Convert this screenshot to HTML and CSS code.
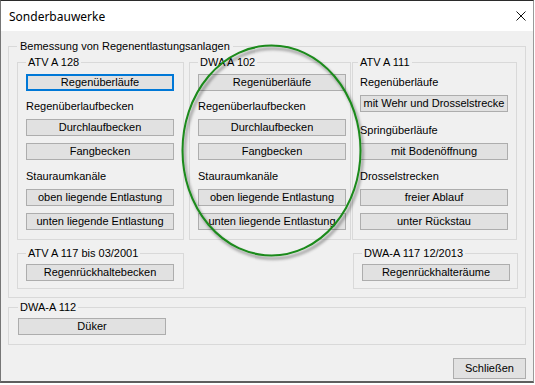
FILE: index.html
```html
<!DOCTYPE html>
<html lang="de">
<head>
    <meta charset="UTF-8">
    <title>Sonderbauwerke</title>
    <link rel="stylesheet" href="styles.css">
</head>
<body>
    <div class="window">
        <div class="titlebar">
            <span class="title">Sonderbauwerke</span>
            <svg class="close-x" width="10" height="10" viewBox="0 0 10 10">
                <path d="M0.5 0.5 L9.5 9.5 M9.5 0.5 L0.5 9.5" stroke="#111" stroke-width="1" fill="none"/>
            </svg>
        </div>

        <div class="client">
            <fieldset class="group outer">
                <legend>Bemessung von Regenentlastungsanlagen</legend>

                <div class="columns">
                    <fieldset class="group col col-128">
                        <legend>ATV A 128</legend>
                        <button class="btn focused">Regenüberläufe</button>
                        <div class="label">Regenüberlaufbecken</div>
                        <button class="btn">Durchlaufbecken</button>
                        <button class="btn">Fangbecken</button>
                        <div class="label after-pair">Stauraumkanäle</div>
                        <button class="btn">oben liegende Entlastung</button>
                        <button class="btn">unten liegende Entlastung</button>
                    </fieldset>

                    <fieldset class="group col col-102">
                        <legend>DWA A 102</legend>
                        <button class="btn">Regenüberläufe</button>
                        <div class="label">Regenüberlaufbecken</div>
                        <button class="btn">Durchlaufbecken</button>
                        <button class="btn">Fangbecken</button>
                        <div class="label after-pair">Stauraumkanäle</div>
                        <button class="btn">oben liegende Entlastung</button>
                        <button class="btn">unten liegende Entlastung</button>
                    </fieldset>

                    <fieldset class="group col col-111">
                        <legend>ATV A 111</legend>
                        <div class="label first">Regenüberläufe</div>
                        <button class="btn">mit Wehr und Drosselstrecke</button>
                        <div class="label wide-gap">Springüberläufe</div>
                        <button class="btn">mit Bodenöffnung</button>
                        <div class="label after-pair">Drosselstrecken</div>
                        <button class="btn">freier Ablauf</button>
                        <button class="btn">unter Rückstau</button>
                    </fieldset>
                </div>

                <div class="bottom-row">
                    <fieldset class="group small small-left">
                        <legend>ATV A 117 bis 03/2001</legend>
                        <button class="btn">Regenrückhaltebecken</button>
                    </fieldset>
                    <fieldset class="group small small-right">
                        <legend>DWA-A 117 12/2013</legend>
                        <button class="btn">Regenrückhalteräume</button>
                    </fieldset>
                </div>
            </fieldset>

            <fieldset class="group duker">
                <legend>DWA-A 112</legend>
                <button class="btn">Düker</button>
            </fieldset>

            <div class="footer">
                <button class="btn btn-close">Schließen</button>
            </div>
        </div>

        <svg class="mark" width="534" height="383" viewBox="0 0 534 383">
            <defs>
                <filter id="shadow" x="-10%" y="-10%" width="130%" height="130%">
                    <feDropShadow dx="2" dy="3" stdDeviation="1.5" flood-color="#000" flood-opacity="0.45"/>
                </filter>
            </defs>
            <ellipse cx="270.5" cy="149.5" rx="89" ry="105" fill="none" stroke="#1b8a1b" stroke-width="2" filter="url(#shadow)"/>
        </svg>
    </div>
</body>
</html>
```

FILE: styles.css
```css
* {
    box-sizing: border-box;
}
body {
    margin: 0;
    background: #fff;
    font-family: "Liberation Sans", Arial, sans-serif;
    font-size: 11px;
    color: #000;
}
.window {
    position: relative;
    width: 534px;
    height: 383px;
    background: #f0f0f0;
    border-top: 1px solid #2b2b2b;
    border-left: 1px solid #767676;
    border-right: 1px solid #9a9a9a;
    border-bottom: 2px solid #5e5e5e;
}
.titlebar {
    height: 30px;
    background: #fff;
    display: flex;
    align-items: center;
    justify-content: space-between;
    padding: 0 7px 0 8px;
}
.title {
    font-family: "Segoe UI", "Noto Sans", sans-serif;
    font-size: 12px;
}
.close-x {
    display: block;
}
.client {
    padding: 9px 7px 0 7px;
}

/* group boxes */
.group {
    margin: 0;
    min-width: 0;
    border: 1px solid #d9d9d9;
    padding: 5px 8px 7px 8px;
}
.group > legend {
    padding: 0 2px;
    font-size: 11px;
    line-height: 13px;
}
.outer {
    padding: 3px 7px 8px 8px;
}
.outer > legend {
    padding: 0 3px;
}
.columns {
    display: flex;
}
.col {
    display: flex;
    flex-direction: column;
    flex-shrink: 0;
    padding-bottom: 9px;
}
.col-128 {
    width: 167px;
}
.col-102 {
    width: 162px;
    margin-left: 5px;
}
.col-111 {
    width: 165px;
    margin-left: 1px;
    padding-left: 7px;
}
.col-111 > legend {
    margin-left: -2px;
}
.label {
    line-height: 13px;
    white-space: nowrap;
}
.btn + .label {
    margin-top: 9px;
}
.label + .btn {
    margin-top: 6px;
}
.btn + .btn {
    margin-top: 7px;
}
.label.first {
    margin-top: 2px;
}
.label.wide-gap {
    margin-top: 12px;
}
.label.after-pair {
    margin-top: 10px;
}

.bottom-row {
    display: flex;
    justify-content: space-between;
    margin-top: 7px;
}
.small {
    padding-top: 4px;
}
.small-left {
    width: 167px;
}
.small-right {
    width: 165px;
}
.duker {
    margin-top: 3px;
    padding: 4px 9px 9px 9px;
}

/* buttons */
.btn {
    display: block;
    width: 148px;
    height: 17px;
    padding: 0;
    margin: 0;
    background: #e1e1e1;
    border: 1px solid #adadad;
    font-family: "Liberation Sans", Arial, sans-serif;
    font-size: 11px;
    line-height: 15px;
    color: #000;
    text-align: center;
    white-space: nowrap;
}
.btn.focused {
    border: 2px solid #0078d7;
    line-height: 13px;
}
.footer {
    display: flex;
    justify-content: flex-end;
    margin-top: 13px;
}
.btn-close {
    width: 73px;
    height: 21px;
    line-height: 19px;
}

.mark {
    position: absolute;
    left: 0;
    top: 0;
    pointer-events: none;
}
```
